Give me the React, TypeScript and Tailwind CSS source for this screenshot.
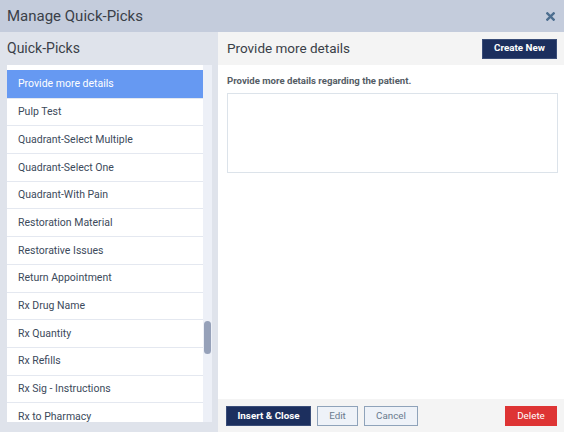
import * as React from "react";

const items = [
  "Provide more details",
  "Pulp Test",
  "Quadrant-Select Multiple",
  "Quadrant-Select One",
  "Quadrant-With Pain",
  "Restoration Material",
  "Restorative Issues",
  "Return Appointment",
  "Rx Drug Name",
  "Rx Quantity",
  "Rx Refills",
  "Rx Sig - Instructions",
  "Rx to Pharmacy",
];

const font = { fontFamily: "Roboto, 'Liberation Sans', sans-serif" };

function CloseIcon() {
  return (
    <svg width="9" height="9" viewBox="0 0 10 10" aria-hidden="true">
      <path
        d="M1.5 1.5 L8.5 8.5 M8.5 1.5 L1.5 8.5"
        stroke="#4d6e8f"
        strokeWidth="2.6"
        strokeLinecap="square"
      />
    </svg>
  );
}

export default function App() {
  const [selected, setSelected] = React.useState(0);

  return (
    <div
      className="flex h-[432px] w-[564px] flex-col overflow-hidden bg-white"
      style={font}
    >
      {/* title bar */}
      <div className="flex h-[32px] shrink-0 items-center justify-between bg-[#c4ccdc] pl-[7px] pr-[7px]">
        <div className="text-[15px] text-[#3a3f48]">Manage Quick-Picks</div>
        <button type="button" className="flex h-[14px] w-[14px] items-center justify-center">
          <CloseIcon />
        </button>
      </div>

      <div className="flex min-h-0 flex-1">
        {/* left: list */}
        <div className="flex w-[218px] shrink-0 flex-col bg-[#dfe3eb]">
          <div className="flex h-[33px] shrink-0 items-center px-[7px] text-[14px] text-[#3a3f48]">
            Quick-Picks
          </div>
          <div className="flex min-h-0 flex-1 pb-[10px] pl-[7px] pr-[6px]">
            <div className="min-h-0 w-[196px] overflow-hidden bg-white pt-[5px]">
              {items.map((label, i) => (
                <div
                  key={label}
                  onClick={() => setSelected(i)}
                  className={[
                    "flex h-[27.7px] cursor-pointer items-center pl-[11px] text-[10.5px]",
                    i === selected
                      ? "bg-[#6699f2] text-white"
                      : "border-t border-[#e4e8f0] text-[#3c4a5b]",
                  ].join(" ")}
                >
                  {label}
                </div>
              ))}
            </div>
            <div className="relative w-[9px] bg-[#edf0f7]">
              <div className="absolute left-[1px] top-[256px] h-[33px] w-[7px] rounded-full bg-[#96a1b9]" />
            </div>
          </div>
        </div>

        {/* right: details */}
        <div className="flex min-w-0 flex-1 flex-col">
          <div className="flex h-[33px] shrink-0 items-center justify-between bg-[#f4f4f4] pl-[9px] pr-[7px]">
            <div className="text-[13.5px] text-[#3a3f48]">Provide more details</div>
            <button
              type="button"
              className="h-[20px] w-[75px] border border-[#3a4d78] bg-[#1c2f5e] text-[9.8px] font-bold text-white"
            >
              Create New
            </button>
          </div>

          <div className="min-h-0 flex-1 bg-white pl-[9px] pr-[6px] pt-[9px]">
            <div className="text-[9.6px] font-bold text-[#555d66]">
              Provide more details regarding the patient.
            </div>
            <textarea className="mt-[5px] block h-[80px] w-[331px] resize-none border border-[#dce3ea] p-1 text-[11px] outline-none" />
          </div>

          <div className="flex h-[33px] shrink-0 items-start bg-[#f4f4f4] pl-[8px] pr-[7px] pt-[7px]">
            <button
              type="button"
              className="h-[20px] w-[85px] border border-[#3a4d78] bg-[#1c2f5e] text-[9.8px] font-bold text-white"
            >
              Insert &amp; Close
            </button>
            <button
              type="button"
              className="ml-[6px] h-[20px] w-[41px] border border-[#8fa3ba] bg-[#eef2f8] text-[9.8px] text-[#6a7a8e]"
            >
              Edit
            </button>
            <button
              type="button"
              className="ml-[6px] h-[20px] w-[54px] border border-[#8fa3ba] bg-[#eef2f8] text-[9.8px] text-[#6a7a8e]"
            >
              Cancel
            </button>
            <button
              type="button"
              className="ml-auto h-[20px] w-[52px] bg-[#de3434] text-[9.8px] text-white"
            >
              Delete
            </button>
          </div>
        </div>
      </div>
    </div>
  );
}
